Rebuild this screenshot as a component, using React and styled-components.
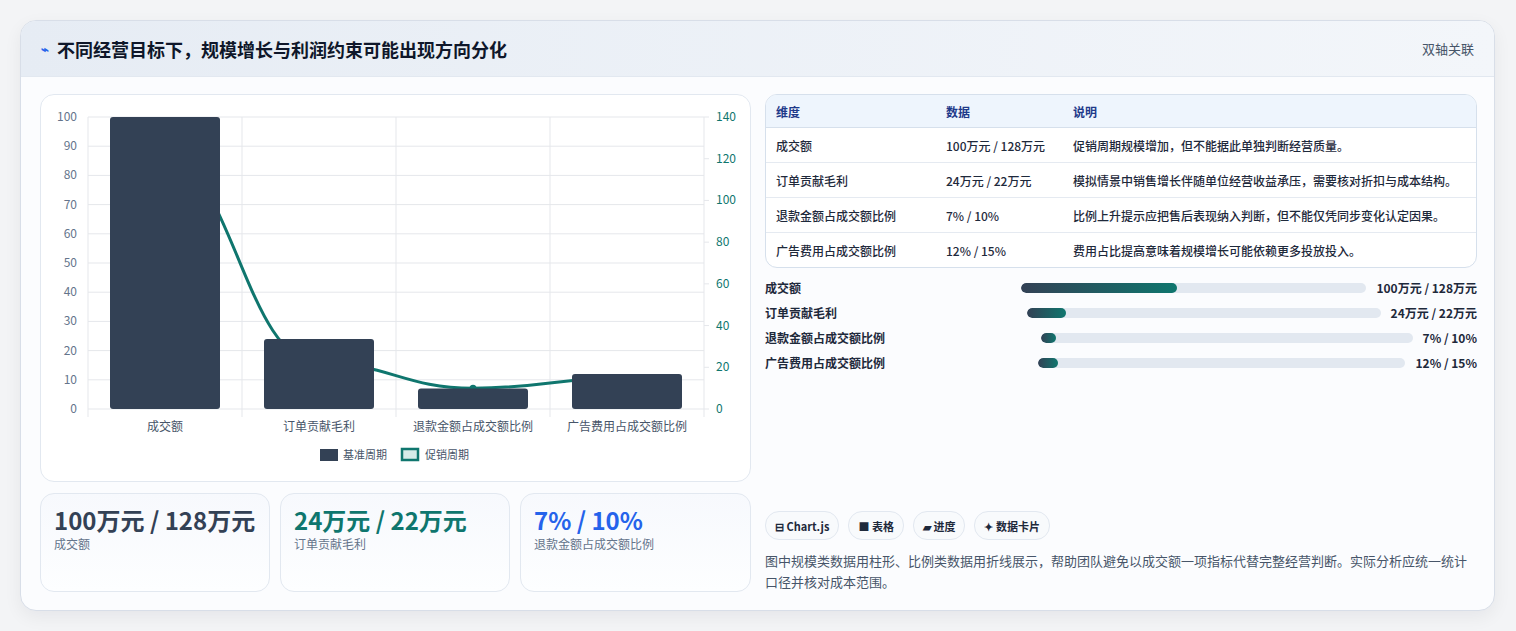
import styled, { createGlobalStyle } from 'styled-components'

const INK = '#334155';
const TEAL = '#0f766e';
const FONT = `"Noto Sans CJK SC", "Noto Sans", sans-serif`;

const Global = createGlobalStyle`
  body { margin: 0; background: #f3f4f6; font-family: ${FONT}; }
`

const Page = styled.div`
  padding: 20px 21px 21px 20px;
`
const Card = styled.div`
  background: #fbfcfe;
  border: 1px solid #d8dee8;
  border-radius: 16px;
  overflow: hidden;
  box-shadow: 0 6px 18px rgba(15, 23, 42, 0.06);
`
const Header = styled.div`
  height: 55px;
  display: flex;
  align-items: center;
  justify-content: space-between;
  padding: 0 20px 0 20px;
  background: linear-gradient(90deg, #e6ecf4, #f3f6fa);
  border-bottom: 1px solid #e2e8f0;
`
const Title = styled.h1`
  margin: 0;
  font-size: 18px;
  font-weight: 700;
  color: #0f172a;
  display: flex;
  align-items: center;
  gap: 8px;
`
const Bolt = styled.span`
  color: #2563eb;
  font-size: 13px;
`
const Tag = styled.span`
  font-size: 13px;
  color: #475569;
`
const Body = styled.div`
  display: grid;
  grid-template-columns: 711px 712px;
  gap: 14px;
  padding: 17px 18px 18px 19px;
`
const Col = styled.div`
  display: flex;
  flex-direction: column;
`
const ChartCard = styled.div`
  height: 388px;
  background: #fff;
  border: 1px solid #e2e8f0;
  border-radius: 14px;
  box-sizing: border-box;
`
const Kpis = styled.div`
  display: grid;
  grid-template-columns: 230px 230px 231px;
  gap: 10px;
  margin-top: 11px;
`
const Kpi = styled.div`
  height: 99px;
  box-sizing: border-box;
  padding: 12px 13px;
  border: 1px solid #e2e8f0;
  border-radius: 14px;
  background: linear-gradient(180deg, #f7f9fd, #fdfeff);
`
const KpiValue = styled.div`
  font-size: 24px;
  font-weight: 700;
  line-height: 27px;
  color: ${(p) => p.$color};
`
const KpiLabel = styled.div`
  font-size: 12px;
  color: #64748b;
  margin-top: 2px;
`
const Table = styled.table`
  width: 100%;
  border-collapse: separate;
  border-spacing: 0;
  border: 1px solid #d6e0ec;
  border-radius: 12px;
  overflow: hidden;
  font-size: 12px;
  background: #fff;
  th {
    background: #eef5fd;
    color: #1e3a8a;
    text-align: left;
    font-weight: 700;
    height: 32px;
    padding: 0 10px;
    border-bottom: 1px solid #d6e0ec;
  }
  td {
    height: 34px;
    padding: 0 10px;
    color: #1e293b;
    font-weight: 500;
    border-bottom: 1px solid #e5eaf1;
  }
  tr:last-child td { border-bottom: none; }
`
const Bars = styled.div`
  display: flex;
  flex-direction: column;
  gap: 6px;
  margin-top: 10px;
`
const BarRow = styled.div`
  display: flex;
  align-items: center;
  gap: 10px;
  height: 19px;
  font-size: 12px;
  font-weight: 700;
  color: #1e293b;
`
const BarLabel = styled.div`
  flex: 1 1 0;
`
const Track = styled.div`
  flex: 1.4 1 0;
  height: 10px;
  border-radius: 5px;
  background: #e2e8f0;
  overflow: hidden;
`
const Fill = styled.div`
  height: 100%;
  border-radius: 5px;
  background: linear-gradient(90deg, ${INK}, ${TEAL});
`
const Spacer = styled.div`
  flex: 1;
`
const Chips = styled.div`
  display: flex;
  gap: 9px;
`
const Chip = styled.span`
  height: 27px;
  padding: 0 9px;
  display: inline-flex;
  align-items: center;
  gap: 4px;
  border: 1px solid #e2e8f0;
  border-radius: 14px;
  background: #f8fafc;
  font-size: 11px;
  font-weight: 700;
  color: #1e293b;
`
const Desc = styled.p`
  margin: 10px 0 0;
  font-size: 13px;
  line-height: 21px;
  color: #475569;
`

const cats = ['成交额', '订单贡献毛利', '退款金额占成交额比例', '广告费用占成交额比例'];
const base = [100, 24, 7, 12];
const promo = [128, 22, 10, 15];

const Chart = () => {
  const x0 = 47, x1 = 663, yTop = 22, yBot = 314, w = (x1 - x0) / 4;
  const yl = (v) => yBot - (v / 100) * (yBot - yTop);
  const yr = (v) => yBot - (v / 140) * (yBot - yTop);
  const pts = promo.map((v, i) => [x0 + w * i + w / 2, yr(v)]);
  let d = `M${pts[0][0]},${pts[0][1]}`;
  for (let i = 1; i < pts.length; i++) {
    const [ax, ay] = pts[i - 1], [bx, by] = pts[i];
    const dx = (bx - ax) / 2.2;
    d += ` C${ax + dx},${ay + (i === 1 ? 40 : 0)} ${bx - dx},${by} ${bx},${by}`;
  }
  return (
    <svg width="709" height="386" fontFamily={FONT}>
      {[0, 10, 20, 30, 40, 50, 60, 70, 80, 90, 100].map((v) => (
        <g key={v}>
          <line x1={x0} x2={x1} y1={yl(v)} y2={yl(v)} stroke="#e5e7eb" />
          <text x={x0 - 11} y={yl(v) + 4} textAnchor="end" fontSize="12" fill="#64748b">{v}</text>
        </g>
      ))}
      {[0, 20, 40, 60, 80, 100, 120, 140].map((v) => (
        <g key={v}>
          <line x1={x1} x2={x1 + 5} y1={yr(v)} y2={yr(v)} stroke="#e5e7eb" />
          <text x={x1 + 12} y={yr(v) + 4} fontSize="12" fill={TEAL}>{v}</text>
        </g>
      ))}
      {[0, 1, 2, 3, 4].map((i) => (
        <line key={i} x1={x0 + w * i} x2={x0 + w * i} y1={yTop} y2={yBot + 8} stroke="#e5e7eb" />
      ))}
      <path d={d} fill="none" stroke={TEAL} strokeWidth="3" />
      {pts.map(([x, y], i) => <circle key={i} cx={x} cy={y} r="3.5" fill={TEAL} />)}
      {base.map((v, i) => (
        <rect key={i} x={x0 + w * i + 22} y={yl(v)} width={w - 44} height={yBot - yl(v)} rx="3" fill={INK} />
      ))}
      {cats.map((c, i) => (
        <text key={c} x={x0 + w * i + w / 2} y={336} textAnchor="middle" fontSize="12" fill="#475569">{c}</text>
      ))}
      <rect x="279" y="354" width="18" height="12" fill={INK} />
      <text x="302" y="364" fontSize="11" fill="#475569">基准周期</text>
      <rect x="361" y="354" width="16" height="11" fill="#d5ebe8" stroke={TEAL} strokeWidth="2.5" />
      <text x="384" y="364" fontSize="11" fill="#475569">促销周期</text>
    </svg>
  );
};

const rows = [
  ['成交额', '100万元 / 128万元', '促销周期规模增加，但不能据此单独判断经营质量。', 45],
  ['订单贡献毛利', '24万元 / 22万元', '模拟情景中销售增长伴随单位经营收益承压，需要核对折扣与成本结构。', 11],
  ['退款金额占成交额比例', '7% / 10%', '比例上升提示应把售后表现纳入判断，但不能仅凭同步变化认定因果。', 4],
  ['广告费用占成交额比例', '12% / 15%', '费用占比提高意味着规模增长可能依赖更多投放投入。', 5.5],
];

export default function App() {
  return (
    <Page>
      <Global />
      <Card>
        <Header>
          <Title><Bolt>⌁</Bolt>不同经营目标下，规模增长与利润约束可能出现方向分化</Title>
          <Tag>双轴关联</Tag>
        </Header>
        <Body>
          <Col>
            <ChartCard><Chart /></ChartCard>
            <Kpis>
              <Kpi><KpiValue $color="#334155">100万元 / 128万元</KpiValue><KpiLabel>成交额</KpiLabel></Kpi>
              <Kpi><KpiValue $color="#0f766e">24万元 / 22万元</KpiValue><KpiLabel>订单贡献毛利</KpiLabel></Kpi>
              <Kpi><KpiValue $color="#2563eb">7% / 10%</KpiValue><KpiLabel>退款金额占成交额比例</KpiLabel></Kpi>
            </Kpis>
          </Col>
          <Col>
            <Table>
              <thead>
                <tr><th style={{ width: 150 }}>维度</th><th style={{ width: 107 }}>数据</th><th>说明</th></tr>
              </thead>
              <tbody>
                {rows.map((r) => (
                  <tr key={r[0]}><td>{r[0]}</td><td>{r[1]}</td><td>{r[2]}</td></tr>
                ))}
              </tbody>
            </Table>
            <Bars>
              {rows.map((r) => (
                <BarRow key={r[0]}>
                  <BarLabel>{r[0]}</BarLabel>
                  <Track><Fill style={{ width: `${r[3]}%` }} /></Track>
                  <span>{r[1]}</span>
                </BarRow>
              ))}
            </Bars>
            <Spacer />
            <Chips>
              <Chip>⊟ Chart.js</Chip>
              <Chip>■ 表格</Chip>
              <Chip>▰ 进度</Chip>
              <Chip>✦ 数据卡片</Chip>
            </Chips>
            <Desc>图中规模类数据用柱形、比例类数据用折线展示，帮助团队避免以成交额一项指标代替完整经营判断。实际分析应统一统计口径并核对成本范围。</Desc>
          </Col>
        </Body>
      </Card>
    </Page>
  );
}
